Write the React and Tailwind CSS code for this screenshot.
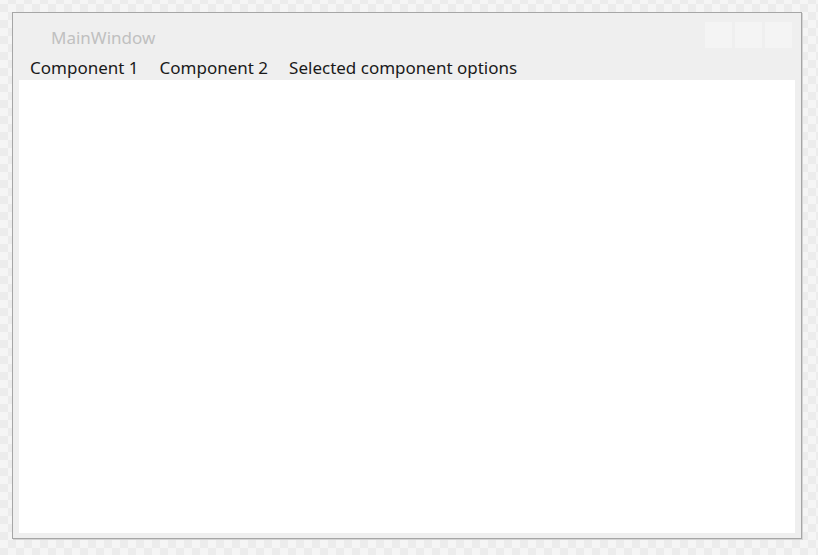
import React from "react";

const menu = ["Component 1", "Component 2", "Selected component options"];

export default function App() {
  return (
    <div className="w-[818px] h-[555px] overflow-hidden pt-[12px] pl-[12px] bg-[conic-gradient(#ececec_25%,#f5f5f5_0_50%,#ececec_0_75%,#f5f5f5_0)] bg-size-[16px_16px] bg-position-[0_-4px] font-['Noto_Sans',sans-serif]">
      <div className="w-[790px] h-[527px] flex flex-col border border-[#a6a6a6] bg-[#efefef] shadow-[1px_1px_0_#d4d4d4]">
        {/* title bar */}
        <div className="h-[42px] flex items-start justify-between">
          <div className="pl-[38px] pt-[14px] text-[17px] leading-[22px] text-[#c0c0c0]">MainWindow</div>
          <div className="flex gap-[3px] pt-[9px] pr-[9px]">
            <div className="w-[27px] h-[26px] bg-[#f4f4f4]"></div>
            <div className="w-[27px] h-[26px] bg-[#f4f4f4]"></div>
            <div className="w-[27px] h-[26px] bg-[#f4f4f4]"></div>
          </div>
        </div>

        {/* menu */}
        <div className="h-[25px] flex items-center pl-[6.5px] text-[17px] text-[#1a1a1a]">
          {menu.map((m) => (
            <span key={m} className="px-[10.5px] leading-[22px]">
              {m}
            </span>
          ))}
        </div>

        <div className="flex-1 bg-white ml-[6px] mr-[6px] mb-[5px]"></div>
      </div>
    </div>
  );
}
